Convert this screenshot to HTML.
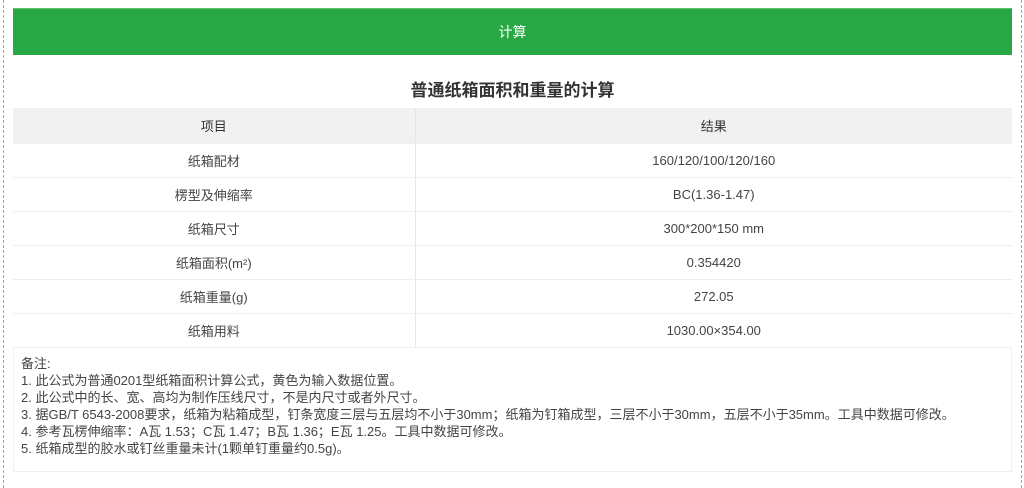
<!DOCTYPE html>
<html><head><meta charset="utf-8"><style>
*{margin:0;padding:0;box-sizing:border-box}
body{width:1024px;height:488px;background:#fff;font-family:"Liberation Sans","Noto Sans CJK SC",sans-serif;color:#333;position:relative;overflow:hidden}
.dl{position:absolute;top:0;bottom:0;left:3px;border-left:1px dashed #e87ab4}
.dr{position:absolute;top:0;bottom:0;left:1021px;border-left:1px dashed #e87ab4}
.bar{position:absolute;left:13px;top:8px;width:999px;height:47px;background:#28a745;border-top:1px solid #5ec56f;color:#fff;font-size:14px;text-align:center;line-height:46px}
.title{position:absolute;left:13px;top:76px;width:999px;text-align:center;font-size:17px;font-weight:bold;color:#333}
table{position:absolute;left:13px;top:108px;width:999px;border-collapse:collapse;font-size:13px;color:#444}
td,th{height:34px;text-align:center;border-bottom:1px solid #eee;font-weight:normal}
th{background:#f1f1f1;height:35px;color:#333}
td:first-child,th:first-child{width:402px;border-right:1px solid #e6e6e6}
.notes{position:absolute;left:13px;top:347px;width:999px;height:125px;border:1px solid #f0f0f0;border-top:none;padding:8px 7px;font-size:13px;line-height:17px;color:#444}
</style></head><body>
<div class="dl"></div><div class="dr"></div>
<div class="bar">计算</div>
<div class="title">普通纸箱面积和重量的计算</div>
<table>
<tr><th>项目</th><th>结果</th></tr>
<tr><td>纸箱配材</td><td>160/120/100/120/160</td></tr>
<tr><td>楞型及伸缩率</td><td>BC(1.36-1.47)</td></tr>
<tr><td>纸箱尺寸</td><td>300*200*150 mm</td></tr>
<tr><td>纸箱面积(m²)</td><td>0.354420</td></tr>
<tr><td>纸箱重量(g)</td><td>272.05</td></tr>
<tr><td>纸箱用料</td><td>1030.00×354.00</td></tr>
</table>
<div class="notes">备注:<br>1. 此公式为普通0201型纸箱面积计算公式，黄色为输入数据位置。<br>2. 此公式中的长、宽、高均为制作压线尺寸，不是内尺寸或者外尺寸。<br>3. 据GB/T 6543-2008要求，纸箱为粘箱成型，钉条宽度三层与五层均不小于30mm；纸箱为钉箱成型，三层不小于30mm，五层不小于35mm。工具中数据可修改。<br>4. 参考瓦楞伸缩率：A瓦 1.53；C瓦 1.47；B瓦 1.36；E瓦 1.25。工具中数据可修改。<br>5. 纸箱成型的胶水或钉丝重量未计(1颗单钉重量约0.5g)。</div>
</body></html>
